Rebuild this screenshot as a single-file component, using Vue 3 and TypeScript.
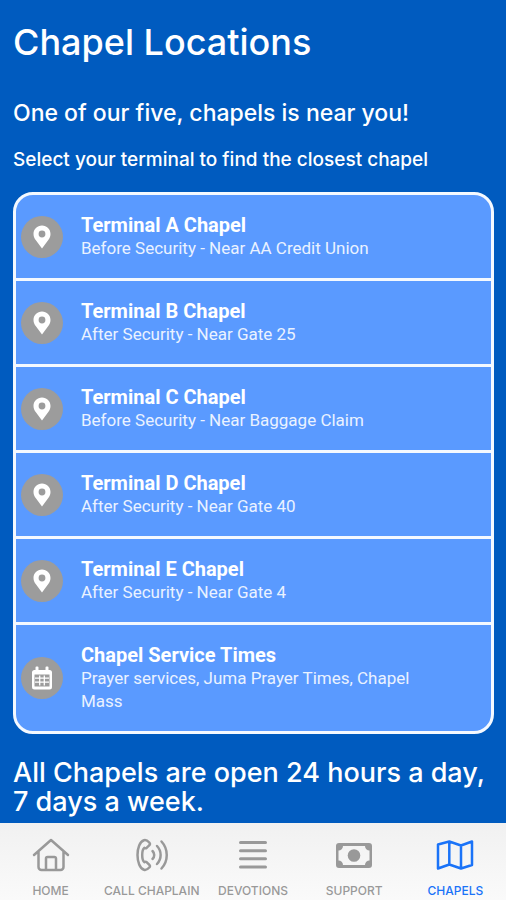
<script setup lang="ts">
import { ref } from 'vue'

interface Place {
  title: string
  detail: string
  icon: 'pin' | 'calendar'
}

interface Tab {
  id: string
  label: string
}

const places: Place[] = [
  { title: 'Terminal A Chapel', detail: 'Before Security - Near AA Credit Union', icon: 'pin' },
  { title: 'Terminal B Chapel', detail: 'After Security - Near Gate 25', icon: 'pin' },
  { title: 'Terminal C Chapel', detail: 'Before Security - Near Baggage Claim', icon: 'pin' },
  { title: 'Terminal D Chapel', detail: 'After Security - Near Gate 40', icon: 'pin' },
  { title: 'Terminal E Chapel', detail: 'After Security - Near Gate 4', icon: 'pin' },
  { title: 'Chapel Service Times', detail: 'Prayer services, Juma Prayer Times, Chapel Mass', icon: 'calendar' },
]

const tabs: Tab[] = [
  { id: 'home', label: 'HOME' },
  { id: 'call', label: 'CALL CHAPLAIN' },
  { id: 'devotions', label: 'DEVOTIONS' },
  { id: 'support', label: 'SUPPORT' },
  { id: 'chapels', label: 'CHAPELS' },
]

const active = ref('chapels')
</script>

<template>
  <div class="screen">
    <main class="content">
      <h1>Chapel Locations</h1>
      <h2>One of our five, chapels is near you!</h2>
      <h3>Select your terminal to find the closest chapel</h3>

      <ul class="places">
        <li v-for="place in places" :key="place.title">
          <a href="#" class="place" @click.prevent>
            <span class="badge">
              <svg v-if="place.icon === 'pin'" class="pin" viewBox="0 0 18 24" aria-hidden="true">
                <path fill-rule="evenodd" d="M9 .5C4.200.5.5 4.200.5 8.900c0 2.400.9 4.200 2.200 6.200L9 23.500l6.300-8.400c1.300-2 2.200-3.800 2.200-6.200C17.500 4.200 13.800.5 9 .5ZM9 5.600a3.400 3.400 0 1 1 0 6.800 3.400 3.400 0 0 1 0-6.800Z" />
              </svg>
              <svg v-else class="calendar" viewBox="0 0 20 24" aria-hidden="true">
                <path fill-rule="evenodd" d="M3.500 1.500a1 1 0 0 1 1-1h1a1 1 0 0 1 1 1V4h7V1.500a1 1 0 0 1 1-1h1a1 1 0 0 1 1 1V4H17.500A2.500 2.500 0 0 1 20 6.500v14.500a2.500 2.500 0 0 1-2.500 2.500h-15A2.500 2.500 0 0 1 0 21v-14.500A2.500 2.500 0 0 1 2.500 4h1ZM2.500 8.500v12h15v-12Z" />
                <path class="grid" d="M3 12.200h14M3 16.200h14M7.700 9.500v10M12.300 9.500v10" />
              </svg>
            </span>
            <span class="text">
              <span class="title">{{ place.title }}</span>
              <span class="detail">{{ place.detail }}</span>
            </span>
          </a>
        </li>
      </ul>

      <p class="hours">All Chapels are open 24 hours a day, 7 days a week.</p>
    </main>

    <nav class="tabs" aria-label="Main">
      <button
        v-for="tab in tabs"
        :key="tab.id"
        type="button"
        class="tab"
        :class="{ active: tab.id === active }"
        @click="active = tab.id"
      >
        <svg viewBox="0 0 40 36" aria-hidden="true">
          <g v-if="tab.id === 'home'">
            <path d="M3 18 20 3l17 15M7.500 14.500V30a3 3 0 0 0 3 3h19a3 3 0 0 0 3-3V14.500M15 33V21.500a1.500 1.500 0 0 1 1.500-1.500h7a1.500 1.500 0 0 1 1.500 1.500V33" />
          </g>
          <g v-else-if="tab.id === 'call'">
            <path d="M12 3.200C7.800 4.500 5.500 11 5.500 18s2.300 13.500 6.500 14.800c1.800.6 3.700-.6 5.300-2.300.9-1 .8-2-.1-2.900l-2.400-2.300c-.8-.7-1.600-.8-2.500-.2-1.700-1.500-2.100-4.100-2.100-7.100s.4-5.600 2.100-7.100c.9.6 1.700.5 2.500-.2l2.400-2.300c.9-.9 1-1.900.1-2.900C15.700 3.800 13.800 2.600 12 3.200Z" />
            <path d="M20.500 14a5.500 5.500 0 0 1 0 8M25 9a13 13 0 0 1 0 18M29.500 4.500a20 20 0 0 1 0 27" />
          </g>
          <g v-else-if="tab.id === 'devotions'">
            <path class="bars" d="M7.500 5.500h25M7.500 13.700h25M7.500 21.800h25M7.500 30h25" />
          </g>
          <g v-else-if="tab.id === 'support'">
            <path class="solid" fill-rule="evenodd" d="M5 6h30a3 3 0 0 1 3 3v19a3 3 0 0 1-3 3H5a3 3 0 0 1-3-3V9a3 3 0 0 1 3-3Zm4 3a4.500 4.500 0 0 1-4.500 4.500v10A4.500 4.500 0 0 1 9 28h22a4.500 4.500 0 0 1 4.500-4.500v-10A4.500 4.500 0 0 1 31 9Z" />
            <circle class="solid" cx="20" cy="18.500" r="6.300" />
          </g>
          <g v-else>
            <path d="M3 7.500 14.300 4.500 26 8.500 37 4.500V28L26 31.500 14.300 27.500 3 31.500ZM14.300 4.500v23M26 8.500v23" />
          </g>
        </svg>
        <span>{{ tab.label }}</span>
      </button>
    </nav>
  </div>
</template>

<style>
body {
  margin: 0;
  background: #005bbf;
}
</style>

<style scoped>
.screen {
  display: flex;
  flex-direction: column;
  min-height: 100vh;
  background: #005bbf;
  color: #fff;
  font-family: Inter, Roboto, sans-serif;
}

.content {
  flex: 1;
  padding: 20px 12px 0 13px;
}

h1,
h2,
h3,
.hours {
  margin: 0;
  font-weight: 500;
}

h1 {
  font-size: 36px;
  line-height: 44px;
}

h2 {
  margin-top: 34px;
  font-size: 23px;
  line-height: 30px;
}

h3 {
  margin-top: 20px;
  font-size: 19px;
  line-height: 24px;
}

.places {
  margin: 20px 0 0;
  padding: 0;
  list-style: none;
  overflow: hidden;
  background: #5a9aff;
  border: 3px solid #f4f9ff;
  border-radius: 20px;
}

li + li {
  border-top: 3px solid #f4f9ff;
}

.place {
  display: flex;
  align-items: center;
  gap: 18px;
  padding: 18px 64px 18px 5px;
  color: inherit;
  text-decoration: none;
  font-family: Roboto, sans-serif;
}

.badge {
  display: flex;
  flex: none;
  align-items: center;
  justify-content: center;
  width: 42px;
  height: 42px;
  border-radius: 50%;
  background: #9c9c9c;
}

.badge svg {
  fill: #fff;
}

.pin {
  width: 18px;
  height: 24px;
}

.calendar {
  width: 20px;
  height: 24px;
}

.grid {
  fill: none;
  stroke: #fff;
  stroke-width: 1.300;
}

.title,
.detail {
  display: block;
}

.title {
  font-size: 20px;
  font-weight: 700;
  line-height: 24px;
}

.detail {
  font-size: 17px;
  line-height: 23px;
  color: #eaf2ff;
}

.hours {
  margin-top: 24px;
  padding-bottom: 7px;
  font-size: 27px;
  line-height: 29px;
}

.tabs {
  position: sticky;
  bottom: 0;
  display: grid;
  grid-template-columns: repeat(5, 1fr);
  height: 77px;
  background: linear-gradient(#f1f1f1, #fafafa);
}

.tab {
  display: flex;
  flex-direction: column;
  align-items: center;
  gap: 10px;
  padding: 14px 0 0;
  border: 0;
  background: none;
  color: #999;
  font-family: Inter, sans-serif;
  font-size: 12px;
  font-weight: 500;
  line-height: 16px;
  white-space: nowrap;
}

.tab.active {
  color: #1a73f8;
}

.tab svg {
  width: 40px;
  height: 36px;
  fill: none;
  stroke: currentColor;
  stroke-width: 2.500;
  stroke-linejoin: round;
  stroke-linecap: round;
}

.tab .bars {
  stroke-width: 3;
}

.tab .solid {
  fill: currentColor;
  stroke: none;
}
</style>
